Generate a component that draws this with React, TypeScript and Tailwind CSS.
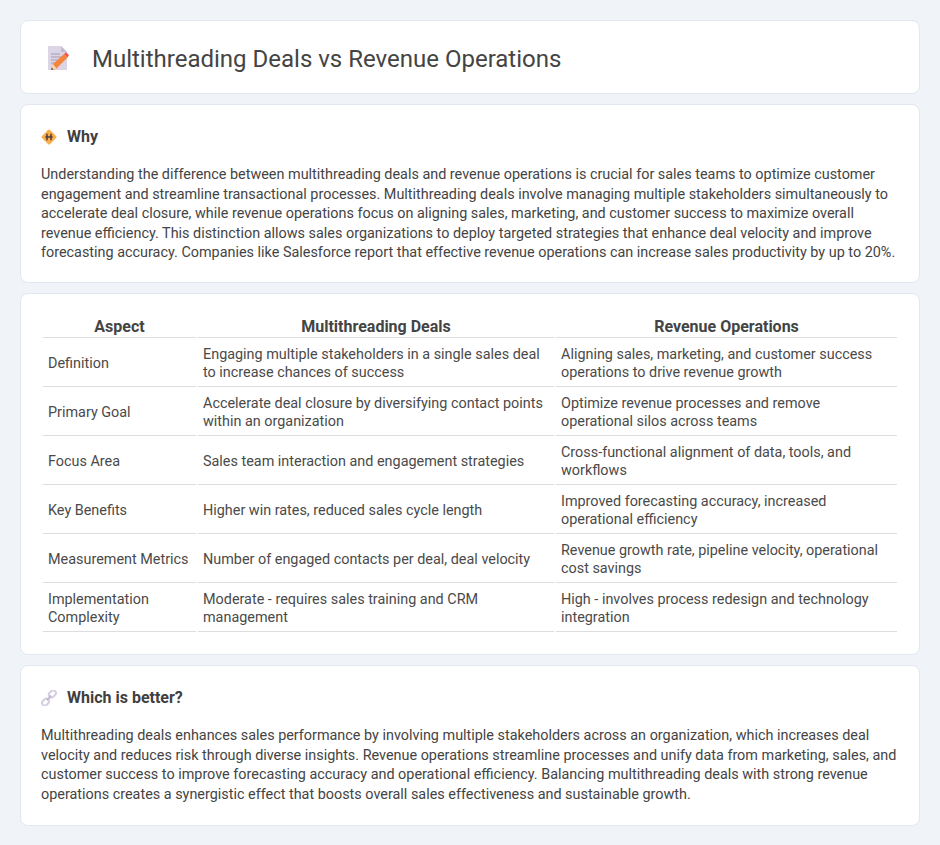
const rows = [
  ["Definition", "Engaging multiple stakeholders in a single sales deal to increase chances of success", "Aligning sales, marketing, and customer success operations to drive revenue growth"],
  ["Primary Goal", "Accelerate deal closure by diversifying contact points within an organization", "Optimize revenue processes and remove operational silos across teams"],
  ["Focus Area", "Sales team interaction and engagement strategies", "Cross-functional alignment of data, tools, and workflows"],
  ["Key Benefits", "Higher win rates, reduced sales cycle length", "Improved forecasting accuracy, increased operational efficiency"],
  ["Measurement Metrics", "Number of engaged contacts per deal, deal velocity", "Revenue growth rate, pipeline velocity, operational cost savings"],
  ["Implementation Complexity", "Moderate - requires sales training and CRM management", "High - involves process redesign and technology integration"],
];

function DocIcon() {
  return (
    <svg width="24" height="24" viewBox="0 0 24 24" className="shrink-0 mt-[2px]">
      <path d="M3 0h13l6 6v18H3z" fill="#dcd5e6" />
      <path d="M16 0l6 6h-6z" fill="#c4bad2" />
      <path d="M6 8h9M6 11h11M6 14h7M6 17h4" stroke="#a59cb2" strokeWidth="1.2" />
      <path d="M6 24l2-6L19 8l3.5 3.5L11 23z" fill="#f5843f" />
      <path d="M19 8l2-1.8 3 3-1.5 2.3z" fill="#f2544b" />
      <path d="M6 24l2-6 3.5 4.5z" fill="#f9d9b8" />
      <path d="M6 24l.8-2.4 1.8 1.6z" fill="#5a4a4a" />
    </svg>
  );
}

function DiamondIcon() {
  return (
    <svg width="16" height="16" viewBox="0 0 16 16" className="shrink-0">
      <rect x="2.3" y="2.3" width="11.4" height="11.4" rx="1.5" transform="rotate(45 8 8)" fill="#f9ad4b" />
      <path d="M6 4.8v6.4M10 4.8v6.4M4.4 8h7.2" stroke="#4a3f3a" strokeWidth="1.5" fill="none" />
    </svg>
  );
}

function LinkIcon() {
  return (
    <svg width="16" height="16" viewBox="0 0 16 16" className="shrink-0">
      <g fill="none" stroke="#d6cde2" strokeWidth="2">
        <rect x="7.6" y="1.2" width="7.6" height="5.4" rx="2.7" transform="rotate(-45 11.4 3.9)" />
        <rect x="0.8" y="9.4" width="7.6" height="5.4" rx="2.7" transform="rotate(-45 4.6 12.1)" />
        <path d="M5.8 10.2l4.4-4.4" stroke="#c2b8d0" />
      </g>
    </svg>
  );
}

const card = "bg-white border border-[#e2e8f0] rounded-lg";
const h2 = "text-base font-bold text-[#3f3f3f] leading-[22px]";
const para = "text-[14.4px] leading-[19.6px] text-[#444]";

export default function App() {
  return (
    <div className="min-h-[845px] bg-[#f0f4f8] p-5 flex flex-col gap-2.5 font-['Roboto',sans-serif]">
      <header className={`${card} h-[74px] flex items-center pl-[24px] gap-[23px]`}>
        <DocIcon />
        <h1 className="text-2xl font-normal text-[#444] relative top-[2px]">Multithreading Deals vs Revenue Operations</h1>
      </header>

      <section className={`${card} px-5 pt-[21px] pb-[19px]`}>
        <div className="flex items-center gap-[10px] mb-[17px]">
          <DiamondIcon />
          <h2 className={h2}>Why</h2>
        </div>
        <p className={para}>
          Understanding the difference between multithreading deals and revenue operations is crucial for sales teams to optimize customer engagement and streamline transactional processes. Multithreading deals involve managing multiple stakeholders simultaneously to accelerate deal closure, while revenue operations focus on aligning sales, marketing, and customer success to maximize overall revenue efficiency. This distinction allows sales organizations to deploy targeted strategies that enhance deal velocity and improve forecasting accuracy. Companies like Salesforce report that effective revenue operations can increase sales productivity by up to 20%.
        </p>
      </section>

      <section className={`${card} px-5 pt-[21px] pb-[20px]`}>
        <table className="w-full border-separate border-spacing-[2px] text-[14.4px] leading-[18px] text-[#4a4a4a] table-fixed">
          <colgroup>
            <col className="w-[153px]" />
            <col className="w-[356px]" />
            <col />
          </colgroup>
          <thead>
            <tr>
              {["Aspect", "Multithreading Deals", "Revenue Operations"].map((t) => (
                <th key={t} className="border-b border-[#dddddd] text-base font-bold text-[#444] leading-[20px] pb-0 text-center">{t}</th>
              ))}
            </tr>
          </thead>
          <tbody>
            {rows.map((r) => (
              <tr key={r[0]}>
                {r.map((c) => (
                  <td key={c} className="border-b border-[#dddddd] px-[5px] pt-[6px] pb-[4px] align-middle h-[47px]">{c}</td>
                ))}
              </tr>
            ))}
          </tbody>
        </table>
      </section>

      <section className={`${card} px-5 pt-[21px] pb-[21px]`}>
        <div className="flex items-center gap-[10px] mb-[17px]">
          <LinkIcon />
          <h2 className={h2}>Which is better?</h2>
        </div>
        <p className={para}>
          Multithreading deals enhances sales performance by involving multiple stakeholders across an organization, which increases deal velocity and reduces risk through diverse insights. Revenue operations streamline processes and unify data from marketing, sales, and customer success to improve forecasting accuracy and operational efficiency. Balancing multithreading deals with strong revenue operations creates a synergistic effect that boosts overall sales effectiveness and sustainable growth.
        </p>
      </section>
    </div>
  );
}
